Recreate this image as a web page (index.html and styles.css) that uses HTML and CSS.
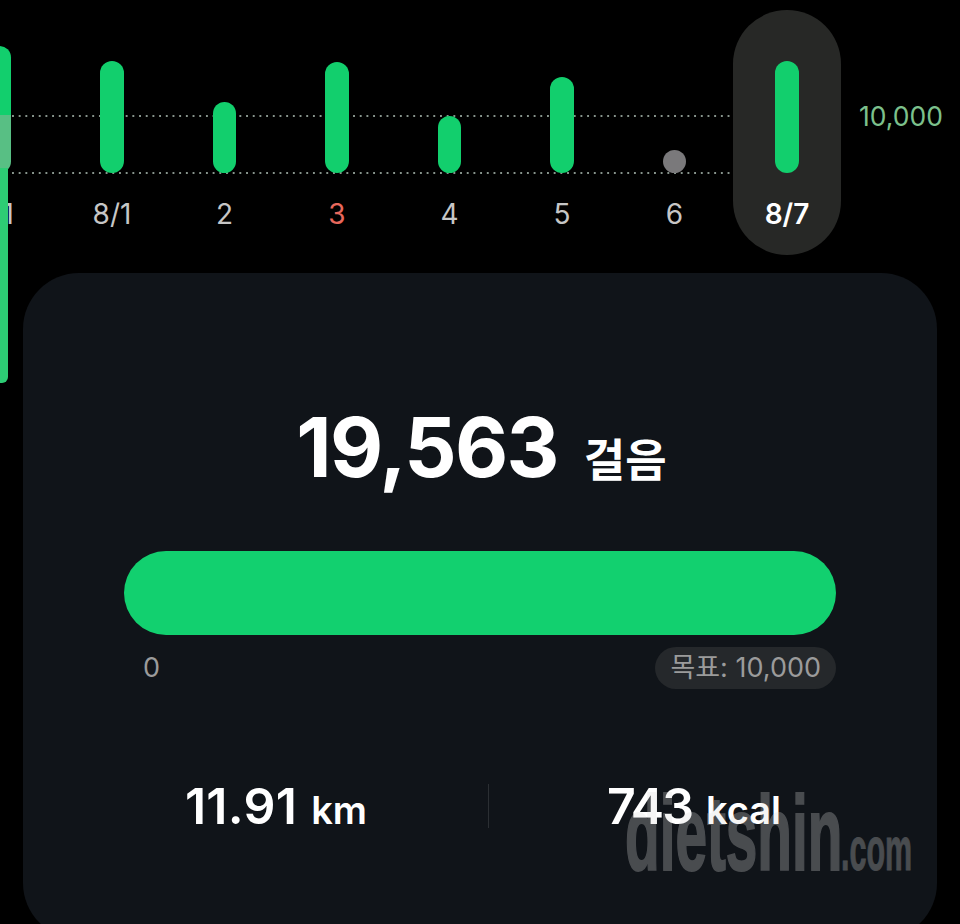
FILE: index.html
```html
<!DOCTYPE html>
<html lang="ko">
<head>
<meta charset="utf-8">
<title>걸음</title>
<link rel="stylesheet" href="styles.css">
</head>
<body>
<section class="chart">
  <div class="guide guide-goal"></div>
  <div class="guide guide-base"></div>
  <div class="days">
    <div class="day"><div class="plot"><div class="bar bar-0"></div></div><div class="label">31</div></div>
    <div class="day"><div class="plot"><div class="bar bar-1"></div></div><div class="label">8/1</div></div>
    <div class="day"><div class="plot"><div class="bar bar-2"></div></div><div class="label">2</div></div>
    <div class="day"><div class="plot"><div class="bar bar-3"></div></div><div class="label label-sun">3</div></div>
    <div class="day"><div class="plot"><div class="bar bar-4"></div></div><div class="label">4</div></div>
    <div class="day"><div class="plot"><div class="bar bar-5"></div></div><div class="label">5</div></div>
    <div class="day"><div class="plot"><div class="bar bar-6"></div></div><div class="label">6</div></div>
    <div class="day day-active"><div class="plot"><div class="bar bar-1"></div></div><div class="label label-active">8/7</div></div>
  </div>
  <div class="goal-label">10,000</div>
  <div class="edge-bar"></div>
</section>
<main class="card">
  <div class="headline"><span class="steps">19,563</span><span class="steps-unit">걸음</span></div>
  <div class="progress"></div>
  <div class="scale"><span class="scale-min">0</span><span class="scale-goal">목표: 10,000</span></div>
  <div class="stats">
    <div class="stat stat-distance"><span class="stat-value">11.91</span><span class="stat-unit">km</span></div>
    <div class="stat-divider"></div>
    <div class="stat"><span class="stat-value stat-value-tight">743</span><span class="stat-unit">kcal</span></div>
  </div>
  <div class="watermark"><span class="wm-main">dietshin</span><span class="wm-com">.com</span></div>
</main>
</body>
</html>
```
FILE: styles.css
```css
* { box-sizing: border-box; }
html, body { margin: 0; height: 924px; overflow: hidden; background: #000; }
body { font-family: Inter, "Noto Sans CJK KR", sans-serif; color: #fff; }

.chart { position: relative; height: 273px; }
.guide {
  position: absolute; left: 12px; width: 718px; height: 2px;
  background-image: linear-gradient(90deg, #87948c 2px, transparent 2px);
  background-size: 6.7px 2px;
}
.guide-goal { top: 115px; }
.guide-base { top: 172px; }

.days { position: relative; display: flex; gap: 4.5px; margin-left: -54.5px; padding-top: 10px; }
.day { width: 108px; height: 245px; border-radius: 54px; display: flex; flex-direction: column; align-items: center; flex: none; }
.day-active { background: #272826; }
.plot { height: 163px; display: flex; align-items: flex-end; }
.bar { width: 23.5px; border-radius: 12px; background: #12cf6d; }
.bar-0 { height: 127px; background: linear-gradient(180deg, #12cf6d 69px, #58bf84 69px); }
.bar-1 { height: 112px; }
.bar-2 { height: 71px; }
.bar-3 { height: 111px; }
.bar-4 { height: 57px; }
.bar-5 { height: 96px; }
.bar-6 { height: 23px; background: #7a797b; }
.label { margin-top: 24px; font-size: 28px; line-height: 34px; color: #c6c6c6; white-space: nowrap; }
.label-sun { color: #e8685c; }
.label-active { color: #fff; font-weight: 600; }

.goal-label { position: absolute; left: 859px; top: 99px; font-size: 26.5px; line-height: 34px; color: #7cc08c; }
.edge-bar {
  position: absolute; left: 0; top: 168px; width: 8px; height: 215px; border-radius: 0 0 6px 0;
  background: #2dcc74;
}

.card {
  position: relative; margin-left: 23px; width: 914px; height: 666px; border-radius: 56px;
  background: #101419; padding: 127px 101px 0;
}
.headline { display: flex; align-items: baseline; justify-content: center; gap: 26px; height: 100px; padding-left: 3px; }
.steps { font-size: 82px; line-height: 96px; font-weight: 650; letter-spacing: -1.7px; }
.steps-unit { font-size: 45px; font-weight: 600; font-family: "Noto Sans CJK KR", sans-serif; }
.progress { height: 84px; margin-top: 51px; border-radius: 42px; background: #12d06f; }
.scale { display: flex; justify-content: space-between; align-items: center; margin-top: 12px; height: 42px; }
.scale-min { margin-left: 19px; font-size: 27px; line-height: 40px; color: #9b9b9b; }
.scale-goal { height: 42px; padding: 0 15px; border-radius: 21px; background: #25282b; color: #9b9b9b; font-size: 27px; line-height: 42px; }
.stats { display: flex; align-items: center; margin: 95px -63px 0 -53px; height: 44px; }
.stat { flex: 1; display: flex; justify-content: center; align-items: baseline; gap: 14px; position: relative; top: 2px; }
.stat-distance { padding-right: 7px; }
.stat-divider { width: 1px; height: 44px; background: #2b2f33; }
.stat-value { font-size: 50px; font-weight: 600; line-height: 60px; letter-spacing: .3px; }
.stat-value-tight { letter-spacing: -2px; }
.stat-unit { font-size: 38px; font-weight: 600; line-height: 60px; }
.watermark {
  position: absolute; left: 602px; top: 506px; display: flex; align-items: baseline;
  font-family: "Liberation Sans", sans-serif; font-weight: 700; color: #dcdcdc; opacity: .28; white-space: nowrap;
}
.wm-main { font-size: 105px; line-height: 110px; display: inline-block; width: 216px; transform: scaleX(.54); transform-origin: left; -webkit-text-stroke: 2px #dcdcdc; }
.wm-com { font-size: 61px; line-height: 110px; display: inline-block; width: 72px; transform: scaleX(.5); transform-origin: left; -webkit-text-stroke: 1px #dcdcdc; }
```
